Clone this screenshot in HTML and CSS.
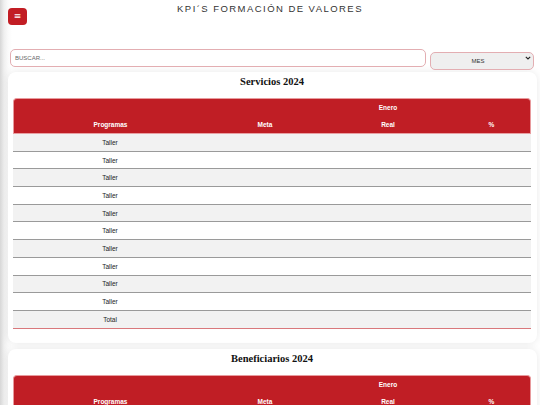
FILE: index.html
```html
<!DOCTYPE html>
<html lang="es">
<head>
<meta charset="utf-8">
<title>KPI´S Formación de Valores</title>
<link rel="stylesheet" href="styles.css">
</head>
<body>
<div class="page">
  <header class="topbar">
    <button class="menu-btn" aria-label="Menú">&#8801;</button>
    <h1 class="title">KPI´S FORMACIÓN DE VALORES</h1>
  </header>

  <div class="filters">
    <input class="search" type="text" placeholder="BUSCAR...">
    <div class="select-wrap">
      <select class="month">
        <option>MES</option>
      </select>
      <svg class="chev" width="6" height="4" viewBox="0 0 6 4" aria-hidden="true"><path d="M0.8 0.8 L3 3 L5.2 0.8" fill="none" stroke="#222" stroke-width="1.1"/></svg>
    </div>
  </div>

  <section class="card">
    <h2 class="card-title">Servicios 2024</h2>
    <table class="kpi">
      <colgroup><col class="c1"><col class="c2"><col class="c3"><col class="c4"></colgroup>
      <thead>
        <tr class="h1"><th></th><th></th><th>Enero</th><th></th></tr>
        <tr class="h2"><th>Programas</th><th>Meta</th><th>Real</th><th>%</th></tr>
      </thead>
      <tbody>
        <tr><td>Taller</td><td></td><td></td><td></td></tr>
        <tr><td>Taller</td><td></td><td></td><td></td></tr>
        <tr><td>Taller</td><td></td><td></td><td></td></tr>
        <tr><td>Taller</td><td></td><td></td><td></td></tr>
        <tr><td>Taller</td><td></td><td></td><td></td></tr>
        <tr><td>Taller</td><td></td><td></td><td></td></tr>
        <tr><td>Taller</td><td></td><td></td><td></td></tr>
        <tr><td>Taller</td><td></td><td></td><td></td></tr>
        <tr><td>Taller</td><td></td><td></td><td></td></tr>
        <tr><td>Taller</td><td></td><td></td><td></td></tr>
        <tr class="total"><td>Total</td><td></td><td></td><td></td></tr>
      </tbody>
    </table>
  </section>

  <section class="card">
    <h2 class="card-title">Beneficiarios 2024</h2>
    <table class="kpi">
      <colgroup><col class="c1"><col class="c2"><col class="c3"><col class="c4"></colgroup>
      <thead>
        <tr class="h1"><th></th><th></th><th>Enero</th><th></th></tr>
        <tr class="h2"><th>Programas</th><th>Meta</th><th>Real</th><th>%</th></tr>
      </thead>
      <tbody>
        <tr><td>Taller</td><td></td><td></td><td></td></tr>
        <tr><td>Taller</td><td></td><td></td><td></td></tr>
        <tr><td>Taller</td><td></td><td></td><td></td></tr>
        <tr><td>Taller</td><td></td><td></td><td></td></tr>
        <tr class="total"><td>Total</td><td></td><td></td><td></td></tr>
      </tbody>
    </table>
  </section>
</div>
</body>
</html>
```

FILE: styles.css
```css
* { box-sizing: border-box; }

html, body {
  margin: 0;
  padding: 0;
}

body {
  font-family: "Liberation Sans", Arial, sans-serif;
  color: #222;
  background: linear-gradient(to right, #d6d6d6 0, #efefef 4px, #fafafa 8px, #ffffff 12px);
  min-height: 100vh;
}

.page {
  padding: 0 3px 0 8px;
}

.topbar {
  position: relative;
  height: 46px;
  padding-top: 8px;
}

.menu-btn {
  display: flex;
  align-items: center;
  justify-content: center;
  width: 19px;
  height: 17px;
  padding: 0;
  border: none;
  border-radius: 4px;
  background: #c21d24;
  color: #fff;
  font-size: 9px;
  line-height: 1;
  font-family: "DejaVu Sans", sans-serif;
}

.title {
  position: absolute;
  top: 3px;
  left: -8px;
  right: -3px;
  margin: 0;
  text-align: center;
  font-weight: normal;
  font-size: 9.5px;
  letter-spacing: 1.45px;
  color: #333;
}

.filters {
  display: flex;
  gap: 4px;
  padding: 3px 3px 0 2px;
  height: 21px;
}

.search {
  flex: 1;
  height: 18px;
  border: 1px solid #e3aeb2;
  border-radius: 5px;
  background: #fff;
  padding: 0 4px;
  font-family: "Liberation Sans", Arial, sans-serif;
  font-size: 6px;
  color: #555;
  outline: none;
}
.search::placeholder { color: #666; }

.select-wrap {
  position: relative;
  width: 104px;
  height: 18px;
}

.month {
  -webkit-appearance: none;
  appearance: none;
  width: 100%;
  height: 18px;
  border: 1px solid #e3aeb2;
  border-radius: 5px;
  background: #efefef;
  font-family: "Liberation Sans", Arial, sans-serif;
  font-size: 6px;
  color: #333;
  text-align: center;
  text-align-last: center;
  padding: 0 8px 0 0;
}

.chev {
  position: absolute;
  right: 3px;
  top: 7px;
  pointer-events: none;
}

.card {
  background: #fff;
  border-radius: 8px;
  box-shadow: 0 0 8px rgba(0, 0, 0, 0.09);
  padding: 4px 6px 14px 5px;
  margin-top: 5px;
  margin-bottom: 6px;
}

.card-title {
  margin: 0;
  text-align: center;
  font-family: "Liberation Serif", "Times New Roman", serif;
  font-size: 10.5px;
  font-weight: bold;
  color: #111;
  height: 22px;
  line-height: 12px;
}

.kpi {
  width: 100%;
  border-collapse: separate;
  border-spacing: 0;
  table-layout: fixed;
  font-size: 6.5px;
}

.kpi .c1 { width: 194px; }
.kpi .c2 { width: 116px; }
.kpi .c3 { width: 130px; }
.kpi .c4 { width: auto; }

.kpi thead th {
  background: #c01e25;
  color: #fff;
  font-weight: bold;
  text-align: center;
  padding: 0;
}

.kpi .h1 th {
  height: 18px;
  border-top: 1px solid #e89a9d;
}
.kpi .h1 th:first-child { border-top-left-radius: 4px; border-left: 1px solid #e89a9d; }
.kpi .h1 th:last-child { border-top-right-radius: 4px; border-right: 1px solid #e89a9d; }

.kpi .h2 th {
  height: 18px;
  border-bottom: 1px solid #e8a0a3;
}
.kpi .h2 th:first-child { border-left: 1px solid #e89a9d; }
.kpi .h2 th:last-child { border-right: 1px solid #e89a9d; }

.kpi tbody td {
  height: 17.7px;
  text-align: center;
  padding: 0;
  color: #222;
  border-bottom: 1px solid #9a9a9a;
}

.kpi tbody tr:nth-child(odd) td { background: #f2f2f2; }
.kpi tbody tr:nth-child(even) td { background: #fff; }

.kpi tbody tr.total td {
  border-bottom: 1px solid #d9787c;
}
```
